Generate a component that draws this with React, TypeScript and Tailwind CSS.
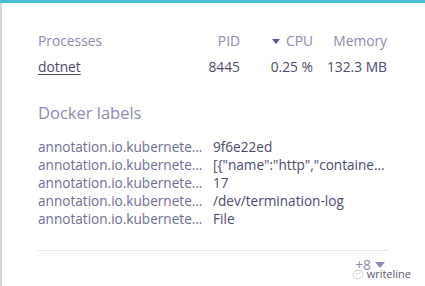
import React from "react";

const labels: [string, string][] = [
  ["annotation.io.kubernetes.container.hash", "9f6e22ed"],
  ["annotation.io.kubernetes.container.ports", '[{"name":"http","containerPort":80,"protocol":"TCP"}]'],
  ["annotation.io.kubernetes.container.restartCount", "17"],
  ["annotation.io.kubernetes.container.terminationMessagePath", "/dev/termination-log"],
  ["annotation.io.kubernetes.container.terminationMessagePolicy", "File"],
];

export default function App() {
  return (
    <div
      className="w-[425px] h-[286px] bg-white overflow-hidden flex flex-col"
      style={{ fontFamily: '"Open Sans", "Liberation Sans", sans-serif' }}
    >
      <div className="h-[3px] bg-[#46bfd1] shrink-0" />
      <div className="flex-1 border-l-2 border-[#d6d6dc] pl-[36px] pr-[38px] pt-[25px]">
        <div className="grid grid-cols-[152px_50px_73px_74px] text-[13.8px] leading-[26px]">
          <div className="text-[#8b8bb3]">Processes</div>
          <div className="text-[#8b8bb3] text-right">PID</div>
          <div className="text-[#8b8bb3] text-right flex items-center justify-end gap-[6px]">
            <svg width="8" height="5" viewBox="0 0 8 5">
              <path d="M0 0 H8 L4 5 Z" fill="#5b5b8a" />
            </svg>
            <span>CPU</span>
          </div>
          <div className="text-[#8b8bb3] text-right">Memory</div>
          <div className="text-[#4b4b6b] underline underline-offset-2">dotnet</div>
          <div className="text-[#4b4b6b] text-right">8445</div>
          <div className="text-[#4b4b6b] text-right">0.25 %</div>
          <div className="text-[#4b4b6b] text-right">132.3 MB</div>
        </div>
        <div className="mt-[21px] text-[16.5px] leading-[24px] text-[#8b8bb3]">Docker labels</div>
        <div className="mt-[13px] flex flex-col text-[13.6px] leading-[18px]">
          {labels.map(([k, v]) => (
            <div key={k} className="flex gap-[8px]">
              <div className="w-[167px] shrink-0 truncate text-[#6e6e96]">{k}</div>
              <div className="flex-1 min-w-0 truncate text-[#4b4b6b]">{v}</div>
            </div>
          ))}
        </div>
        <div className="mt-[22px] border-t border-dotted border-[#c9c9dc]" />
        <div className="relative flex justify-end items-center text-[13.8px] leading-[20px] text-[#8b8bb3] mt-[4px] pr-[2px]">
          <span>+8</span>
          <svg className="ml-[4px]" width="10" height="6" viewBox="0 0 10 6">
            <path d="M0 0 H10 L5 6 Z" fill="#8b8bb3" />
          </svg>
          <div className="absolute right-[-24px] top-[12px] flex items-center gap-[3px] text-[11px] leading-[14px] text-[#5a5a6a]">
            <svg width="12" height="11" viewBox="0 0 12 11">
              <ellipse cx="6" cy="5.5" rx="5" ry="4.3" fill="none" stroke="#c8c8c8" strokeWidth="0.8" />
              <circle cx="4.3" cy="4.5" r="0.7" fill="#c8c8c8" />
              <circle cx="7.7" cy="4.5" r="0.7" fill="#c8c8c8" />
            </svg>
            <span>writeline</span>
          </div>
        </div>
      </div>
    </div>
  );
}
